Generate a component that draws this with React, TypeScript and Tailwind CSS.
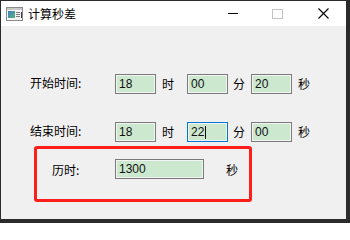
import React from 'react';

const cjk = { fontFamily: '"Noto Sans CJK SC", "Noto Sans", sans-serif' };
const num = { fontFamily: '"Liberation Sans", Arial, sans-serif' };

function Field({ value, w = 'w-[41px]', focused = false }: { value: string; w?: string; focused?: boolean }) {
  return (
    <div
      className={`${w} h-[20px] shrink-0 border ${focused ? 'border-[#0078d7]' : 'border-[#7a7a7a]'} shadow-[inset_0_0_0_1px_#f4f4f4] bg-[#cce8cf] flex items-center pl-[3px] text-[12px] text-[#111] leading-none`}
      style={num}
    >
      {value}
      {focused && <span className="ml-px h-[13px] w-px bg-black" />}
    </div>
  );
}

function Unit({ children, ml, mr }: { children: React.ReactNode; ml: string; mr?: string }) {
  return (
    <span className={`${ml} ${mr ?? ''} text-[12px] leading-none text-black`} style={cjk}>
      {children}
    </span>
  );
}

function TimeRow({ label, h, m, s, focusMin = false }: { label: string; h: string; m: string; s: string; focusMin?: boolean }) {
  return (
    <div className="flex items-center">
      <span className="w-[85px] ml-[29px] text-[12px] leading-none text-black -translate-y-[1px]" style={cjk}>
        {label}
      </span>
      <Field value={h} />
      <Unit ml="ml-[6px]" mr="mr-[13px]">时</Unit>
      <Field value={m} focused={focusMin} />
      <Unit ml="ml-[5px]" mr="mr-[6px]">分</Unit>
      <Field value={s} />
      <Unit ml="ml-[6px]">秒</Unit>
    </div>
  );
}

export default function App() {
  return (
    <div className="w-[350px] h-[223px] bg-[#2b2b2b] pl-px pt-px overflow-hidden">
      <div className="w-[345px] h-[218px] flex flex-col bg-[#f0f0f0]">
        {/* title bar */}
        <div className="h-[25px] bg-white flex items-center relative">
          <svg className="ml-[5px]" width="17" height="14" viewBox="0 0 17 14">
            <rect x="0.5" y="0.5" width="16" height="13" fill="#f4f4f4" stroke="#8a8a8a" />
            <rect x="1" y="1" width="15" height="2" fill="#c9c9c9" />
            <defs>
              <linearGradient id="ico" x1="0" y1="0" x2="1" y2="1">
                <stop offset="0" stopColor="#3b7fc4" />
                <stop offset="1" stopColor="#5fb07a" />
              </linearGradient>
            </defs>
            <rect x="2" y="4" width="7" height="7" fill="url(#ico)" />
            <rect x="10" y="5" width="4" height="1" fill="#7a7a7a" />
            <rect x="10" y="7" width="4" height="1" fill="#7a7a7a" />
            <rect x="10" y="9" width="4" height="1" fill="#7a7a7a" />
            <rect x="15" y="5" width="1" height="6" fill="#3a3a3a" />
          </svg>
          <span className="ml-[5px] text-[12px] leading-none text-black" style={cjk}>
            计算秒差
          </span>
          <div className="ml-auto flex items-center h-full">
            <span className="block w-[10px] h-px bg-black mr-[34px]" />
            <span className="block w-[11px] h-[10px] border border-[#c4c4c4] mr-[35px]" />
            <svg className="mr-[17px]" width="11" height="11" viewBox="0 0 11 11">
              <path d="M0.5 0.5 L10.5 10.5 M10.5 0.5 L0.5 10.5" stroke="#000" strokeWidth="1.1" />
            </svg>
          </div>
        </div>

        {/* body */}
        <div className="flex flex-col pt-[48px]">
          <TimeRow label="开始时间:" h="18" m="00" s="20" />
          <div className="h-[28px]" />
          <TimeRow label="结束时间:" h="18" m="22" s="00" focusMin />
          <div className="ml-[33px] mt-[4px] w-[218px] h-[56px] border-[3px] border-[#ff1f1a] rounded-[3px] flex items-start pt-[10px]">
            <span className="ml-[15px] w-[63px] mt-[5px] text-[12px] leading-none text-black" style={cjk}>
              历时:
            </span>
            <Field value="1300" w="w-[89px]" />
            <span className="ml-[22px] mt-[5px] text-[12px] leading-none text-black" style={cjk}>
              秒
            </span>
          </div>
        </div>
      </div>
    </div>
  );
}
